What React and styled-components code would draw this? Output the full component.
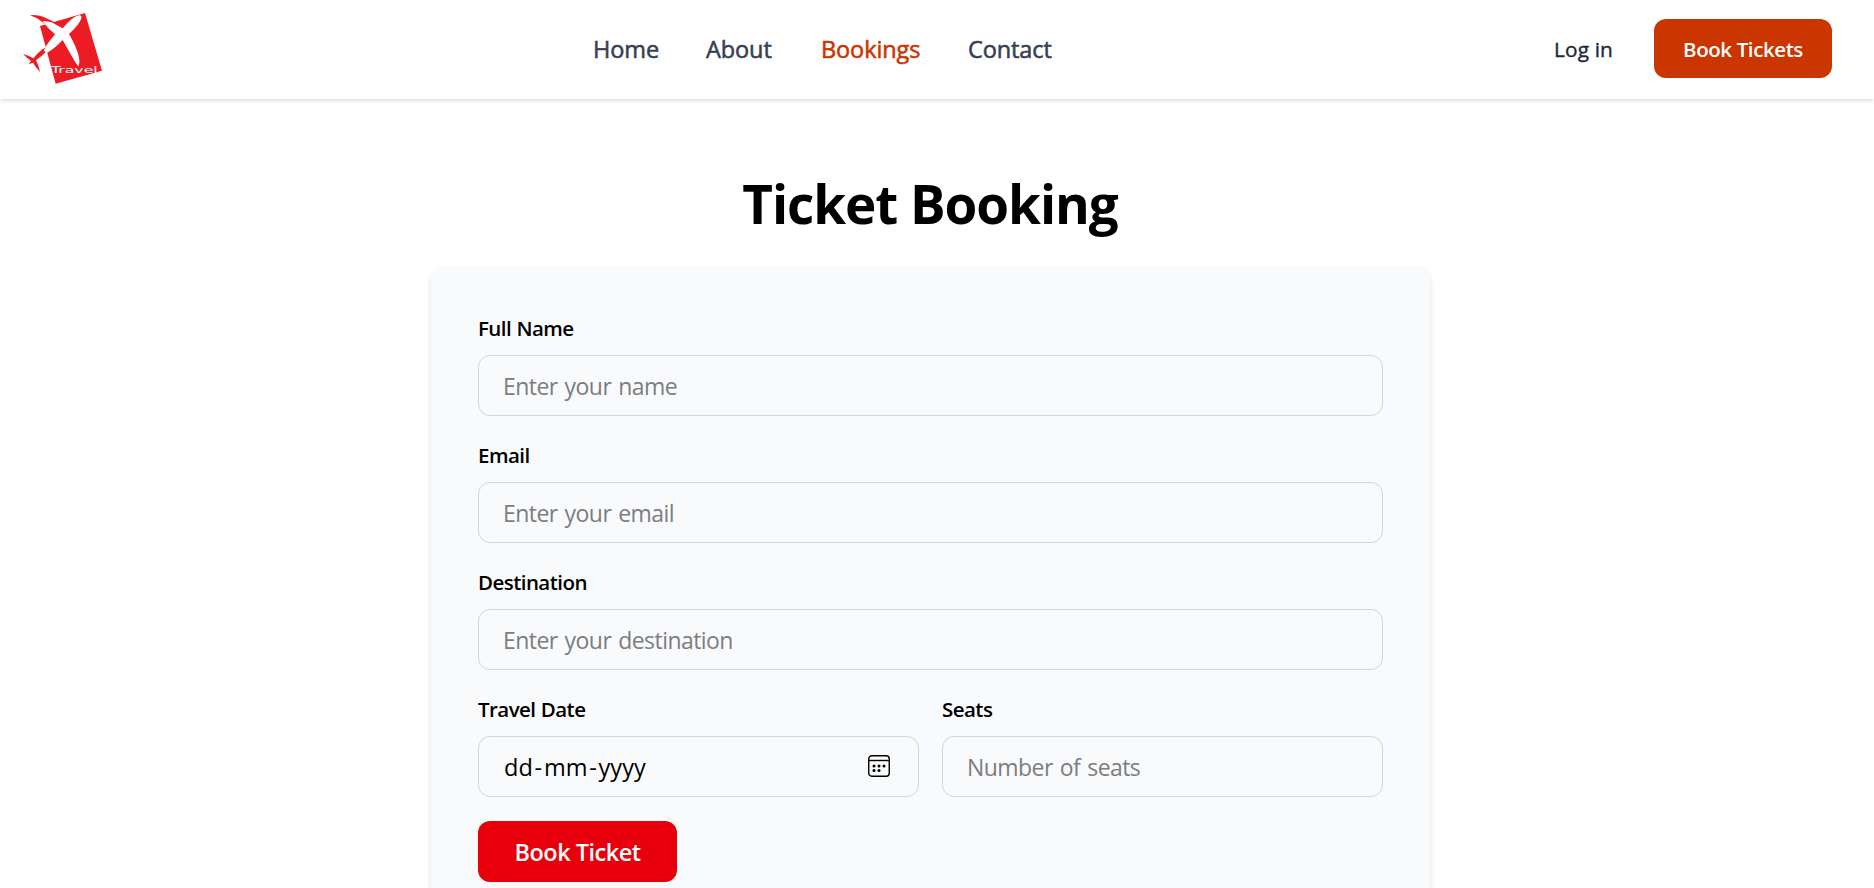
import React from "react";
import styled, { createGlobalStyle } from "styled-components";

const Global = createGlobalStyle`
  *, *::before, *::after { box-sizing: border-box; }
  html, body { margin: 0; height: 100%; overflow: hidden; }
  body { background: #fff; color: #000; font-family: "Open Sans", "Noto Sans", sans-serif; }
`;

const Page = styled.div`
  height: 888px;
  overflow: hidden;
  background: #fff;
`;

const Header = styled.header`
  position: relative;
  display: grid;
  grid-template-columns: 593px 1fr auto;
  align-items: center;
  height: 99px;
  padding-right: 42px;
  background: #fff;
  box-shadow: 0 1.5px 4.5px rgba(0, 0, 0, 0.1), 0 1.5px 3px -1.5px rgba(0, 0, 0, 0.1);
`;

const Logo = styled.svg`
  display: block;
  width: 82px;
  height: 74px;
  margin: -2px 0 0 22px;
`;

const Nav = styled.nav`
  display: flex;
  gap: 48px;
  margin-top: -2px;
`;

const NavLink = styled.a`
  width: ${(p) => p.$w}px;
  white-space: nowrap;
  font-size: 23.5px;
  line-height: 36px;
  letter-spacing: -0.1px;
  -webkit-text-stroke: 0.55px currentColor;
  color: ${(p) => (p.$active ? "#ca3500" : "#364153")};
`;

const Actions = styled.div`
  display: flex;
  align-items: center;
  gap: 41px;
  margin-top: -2px;
`;

const LogIn = styled.a`
  font-size: 20.8px;
  line-height: 30px;
  letter-spacing: 0.15px;
  -webkit-text-stroke: 0.4px currentColor;
  color: #1e2939;
`;

const Button = styled.button`
  display: block;
  border: 0;
  padding: 0;
  border-radius: 12px;
  color: #fff;
  font-family: inherit;
  font-weight: 600;
  white-space: nowrap;
`;

const HeaderButton = styled(Button)`
  width: 178px;
  height: 59px;
  background: #ca3500;
  font-size: 20.5px;
  letter-spacing: -0.4px;
`;

const SubmitButton = styled(Button)`
  width: 199px;
  height: 61px;
  margin: 24px 0 0 -1px;
  background: #e7000b;
  font-size: 23.5px;
  letter-spacing: -0.5px;
`;

const Main = styled.main`
  width: 1000px;
  margin: 69px 0 0 430px;
`;

const Title = styled.h1`
  margin: 0 0 26px;
  text-align: center;
  font-size: 53px;
  line-height: 72px;
  font-weight: 700;
  letter-spacing: -1.05px;
`;

const Card = styled.form`
  height: 720px;
  padding: 48px 47px 0 48px;
  margin-left: 1px;
  width: 999px;
  border-radius: 12px;
  background: #f9fafb;
  box-shadow: 0 6px 9px -1.5px rgba(0, 0, 0, 0.1), 0 3px 6px -3px rgba(0, 0, 0, 0.1);
`;

const Fields = styled.div`
  display: grid;
  grid-template-columns: 1fr 1fr;
  gap: 25px 23px;
  margin-left: -1px;
`;

const Field = styled.label`
  display: block;
  grid-column: ${(p) => (p.$wide ? "1 / -1" : "auto")};
`;

const LabelText = styled.span`
  display: block;
  height: 30px;
  margin-bottom: 11px;
  font-size: 20.5px;
  line-height: 28px;
  font-weight: 600;
  letter-spacing: -0.55px;
  word-spacing: 0.5px;
`;

const Control = styled.span`
  display: flex;
  align-items: center;
  justify-content: space-between;
  height: 61px;
  padding: 0 28px 0 24px;
  border: 1px solid #d1d5dc;
  border-radius: 12px;
`;

const Input = styled.input`
  width: 100%;
  padding: 0;
  border: 0;
  outline: 0;
  background: transparent;
  font-family: inherit;
  font-size: 23px;
  letter-spacing: -0.56px;
  word-spacing: 1.6px;
  &::placeholder { color: #7c7d80; opacity: 1; }
`;

const DateText = styled.span`
  padding-left: 1px;
  font-size: 23.5px;
  white-space: nowrap;
`;

const Dash = styled.span`
  margin: 0 1.8px;
`;

const Calendar = styled.svg`
  display: block;
  flex: none;
  width: 22px;
  height: 22px;
  margin-top: -2px;
`;

const LINKS = [
  { label: "Home", width: 65 },
  { label: "About", width: 67 },
  { label: "Bookings", width: 99, active: true },
  { label: "Contact", width: 84 },
];

const TEXT_FIELDS = [
  { label: "Full Name", hint: "Enter your name" },
  { label: "Email", hint: "Enter your email" },
  { label: "Destination", hint: "Enter your destination" },
];

function TravelLogo() {
  return (
    <Logo viewBox="36 36 246 222" role="img" aria-label="Travel">
      <path d="M90 78 L225 39 L276 212 L137 251 Z" fill="#ed1c24" />
      <path d="M60 46 Q86 43 106 53 L133 66 L104 72 Q82 53 60 46Z" fill="#ed1c24" />
      <path
        d="M98 64 Q119 61 141 76 L158 85 Q187 50 207 46 Q216 45 214 55 Q210 72 177 102 Q199 139 207 172 Q210 190 205 199 Q199 192 188 173 L158 120 Q127 153 104 161 L97 156 Q111 132 135 103 Q114 87 98 64Z"
        fill="#fff"
      />
      <path
        d="M110 142 L97 148 Q80 162 70 175 Q56 166 39 162 Q50 173 63 183 L56 193 L69 188 Q77 202 90 216 Q88 199 78 181 Q96 168 111 153Z"
        fill="#ed1c24"
      />
      <path d="M112 137 L101 151 L108 158 L126 143Z" fill="#fff" />
      <text
        x="123"
        y="218"
        fill="#fff"
        fontFamily="DejaVu Sans, sans-serif"
        fontSize="27"
        textLength="140"
        lengthAdjust="spacingAndGlyphs"
      >
        Travel
      </text>
    </Logo>
  );
}

function CalendarIcon() {
  return (
    <Calendar viewBox="0 0 22 22" aria-hidden="true">
      <rect x="0.75" y="0.75" width="20.5" height="20.5" rx="3" fill="none" stroke="#000" strokeWidth="1.4" />
      <path d="M1 5.5H21" stroke="#000" strokeWidth="1.4" />
      {[[6, 11], [11, 11], [16, 11], [6, 15.5], [11, 15.5]].map(([x, y]) => (
        <circle key={`${x}-${y}`} cx={x} cy={y} r="1.5" />
      ))}
    </Calendar>
  );
}

export default function App() {
  return (
    <Page>
      <Global />
      <Header>
        <TravelLogo />
        <Nav>
          {LINKS.map((l) => (
            <NavLink key={l.label} $w={l.width} $active={l.active}>{l.label}</NavLink>
          ))}
        </Nav>
        <Actions>
          <LogIn>Log in</LogIn>
          <HeaderButton>Book Tickets</HeaderButton>
        </Actions>
      </Header>
      <Main>
        <Title>Ticket Booking</Title>
        <Card>
          <Fields>
            {TEXT_FIELDS.map((f) => (
              <Field key={f.label} $wide>
                <LabelText>{f.label}</LabelText>
                <Control><Input placeholder={f.hint} /></Control>
              </Field>
            ))}
            <Field>
              <LabelText>Travel Date</LabelText>
              <Control>
                <DateText>dd<Dash>-</Dash>mm<Dash>-</Dash>yyyy</DateText>
                <CalendarIcon />
              </Control>
            </Field>
            <Field>
              <LabelText>Seats</LabelText>
              <Control><Input placeholder="Number of seats" /></Control>
            </Field>
          </Fields>
          <SubmitButton type="button">Book Ticket</SubmitButton>
        </Card>
      </Main>
    </Page>
  );
}
